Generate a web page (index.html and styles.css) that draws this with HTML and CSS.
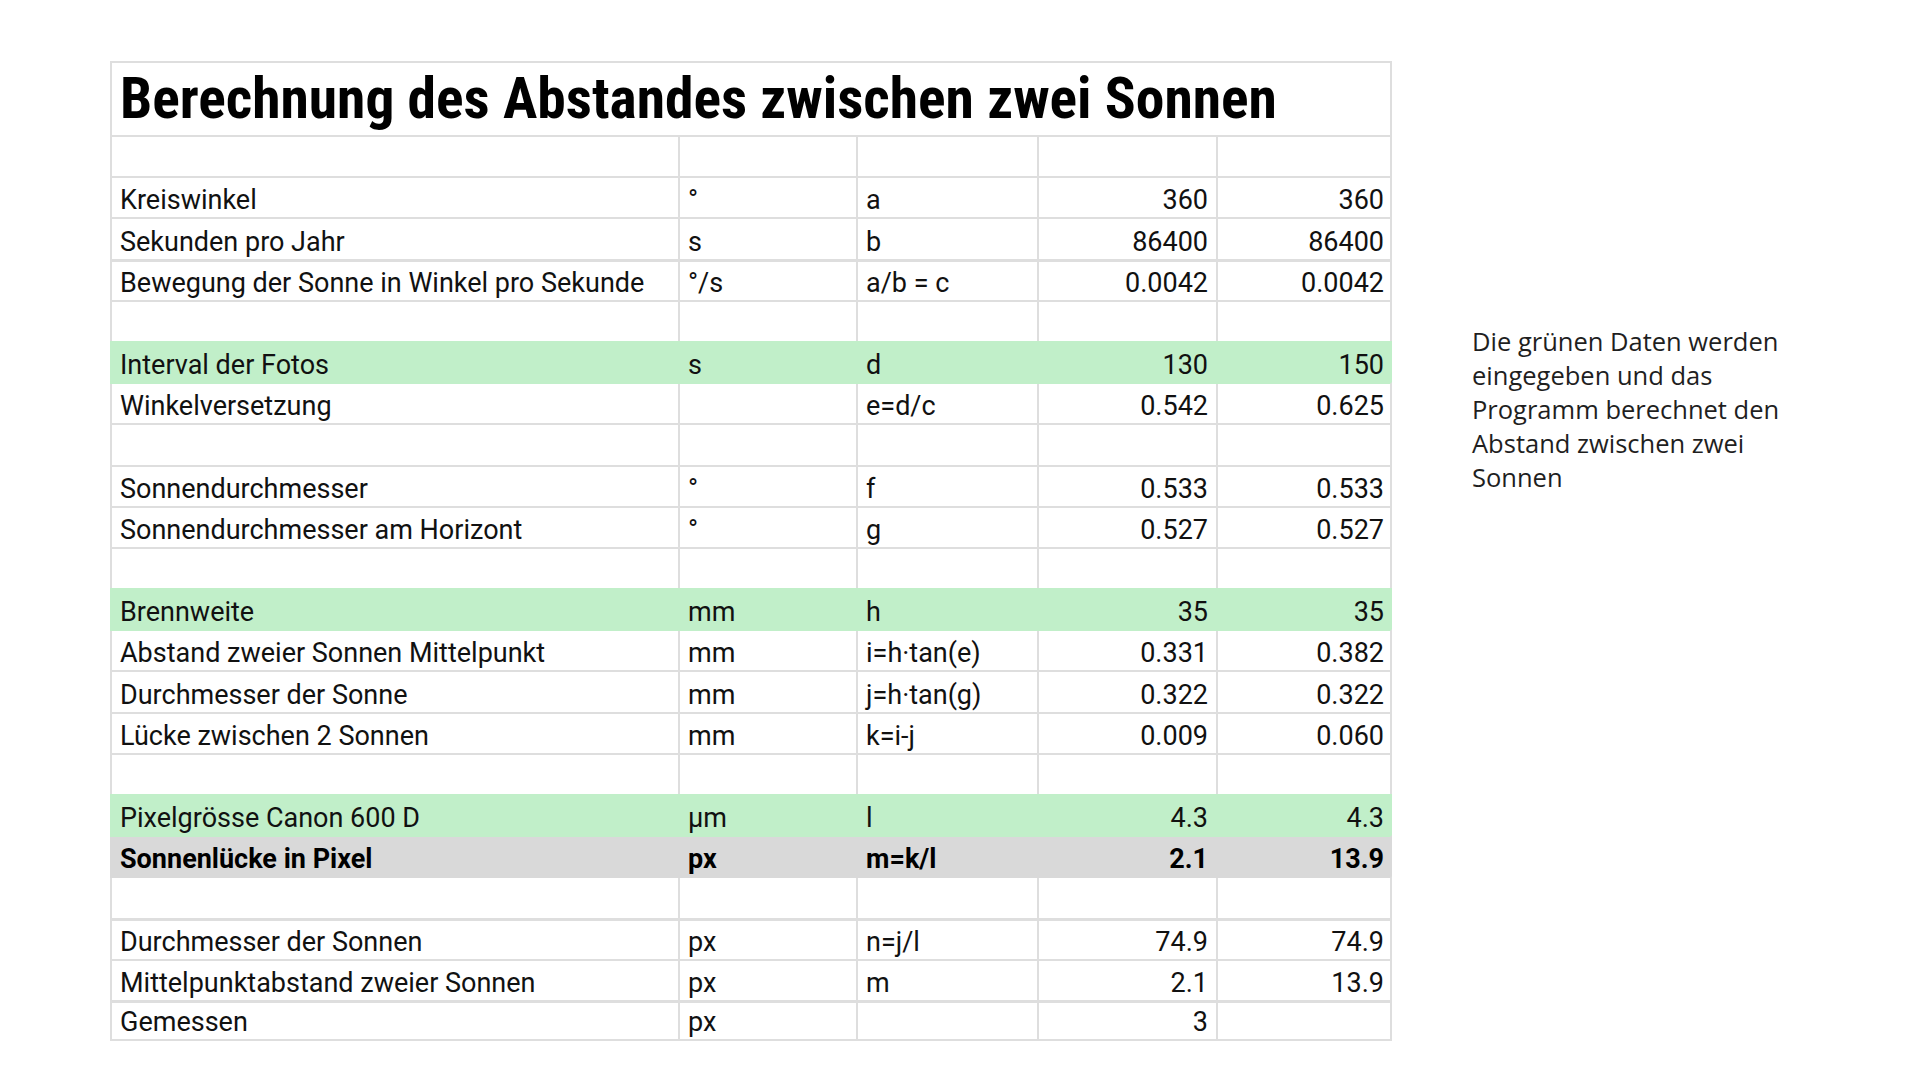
FILE: index.html
```html
<!DOCTYPE html>
<html lang="de">
<head>
<meta charset="utf-8">
<title>Berechnung des Abstandes zwischen zwei Sonnen</title>
<link rel="stylesheet" href="styles.css">
</head>
<body>
<div class="page">
  <div class="sheet">
    <div class="title-row"><h1 class="title">Berechnung des Abstandes zwischen zwei Sonnen</h1></div>
    <div class="row"><div class="c"></div><div class="c"></div><div class="c"></div><div class="c"></div><div class="c"></div></div>
    <div class="row"><div class="c">Kreiswinkel</div><div class="c">°</div><div class="c">a</div><div class="c num">360</div><div class="c num">360</div></div>
    <div class="row"><div class="c">Sekunden pro Jahr</div><div class="c">s</div><div class="c">b</div><div class="c num">86400</div><div class="c num">86400</div></div>
    <div class="row thick"><div class="c">Bewegung der Sonne in Winkel pro Sekunde</div><div class="c">°/s</div><div class="c">a/b = c</div><div class="c num">0.0042</div><div class="c num">0.0042</div></div>
    <div class="row"><div class="c"></div><div class="c"></div><div class="c"></div><div class="c"></div><div class="c"></div></div>
    <div class="row green"><div class="c">Interval der Fotos</div><div class="c">s</div><div class="c">d</div><div class="c num">130</div><div class="c num">150</div></div>
    <div class="row"><div class="c">Winkelversetzung</div><div class="c"></div><div class="c">e=d/c</div><div class="c num">0.542</div><div class="c num">0.625</div></div>
    <div class="row"><div class="c"></div><div class="c"></div><div class="c"></div><div class="c"></div><div class="c"></div></div>
    <div class="row"><div class="c">Sonnendurchmesser</div><div class="c">°</div><div class="c">f</div><div class="c num">0.533</div><div class="c num">0.533</div></div>
    <div class="row"><div class="c">Sonnendurchmesser am Horizont</div><div class="c">°</div><div class="c">g</div><div class="c num">0.527</div><div class="c num">0.527</div></div>
    <div class="row"><div class="c"></div><div class="c"></div><div class="c"></div><div class="c"></div><div class="c"></div></div>
    <div class="row green"><div class="c">Brennweite</div><div class="c">mm</div><div class="c">h</div><div class="c num">35</div><div class="c num">35</div></div>
    <div class="row"><div class="c">Abstand zweier Sonnen Mittelpunkt</div><div class="c">mm</div><div class="c">i=h·tan(e)</div><div class="c num">0.331</div><div class="c num">0.382</div></div>
    <div class="row"><div class="c">Durchmesser der Sonne</div><div class="c">mm</div><div class="c">j=h·tan(g)</div><div class="c num">0.322</div><div class="c num">0.322</div></div>
    <div class="row"><div class="c">Lücke zwischen 2 Sonnen</div><div class="c">mm</div><div class="c">k=i-j</div><div class="c num">0.009</div><div class="c num">0.060</div></div>
    <div class="row"><div class="c"></div><div class="c"></div><div class="c"></div><div class="c"></div><div class="c"></div></div>
    <div class="row green"><div class="c">Pixelgrösse Canon 600 D</div><div class="c">µm</div><div class="c">l</div><div class="c num">4.3</div><div class="c num">4.3</div></div>
    <div class="row gray bold"><div class="c">Sonnenlücke in Pixel</div><div class="c">px</div><div class="c">m=k/l</div><div class="c num">2.1</div><div class="c num">13.9</div></div>
    <div class="row"><div class="c"></div><div class="c"></div><div class="c"></div><div class="c"></div><div class="c"></div></div>
    <div class="row thick"><div class="c">Durchmesser der Sonnen</div><div class="c">px</div><div class="c">n=j/l</div><div class="c num">74.9</div><div class="c num">74.9</div></div>
    <div class="row"><div class="c">Mittelpunktabstand zweier Sonnen</div><div class="c">px</div><div class="c">m</div><div class="c num">2.1</div><div class="c num">13.9</div></div>
    <div class="row thick last"><div class="c">Gemessen</div><div class="c">px</div><div class="c"></div><div class="c num">3</div><div class="c"></div></div>
  </div>
  <p class="note">Die grünen Daten werden eingegeben und das Programm berechnet den Abstand zwischen zwei Sonnen</p>
</div>
</body>
</html>
```
FILE: styles.css
```css
html, body {
  margin: 0;
  padding: 0;
  background: #ffffff;
}

body {
  width: 1920px;
  height: 1080px;
  overflow: hidden;
  font-family: "Roboto", "Liberation Sans", sans-serif;
  color: #000;
}

.page {
  display: flex;
  align-items: flex-start;
  gap: 80px;
  padding: 61px 0 0 110px;
}

.sheet {
  display: flex;
  flex-direction: column;
  width: 1282px;
}

.title-row {
  height: 74px;
  box-sizing: border-box;
  border: 2px solid #dedede;
  border-bottom: none;
  display: flex;
  align-items: flex-end;
  padding: 0 8px 8px 8px;
}

.title {
  margin: 0;
  font-family: "Roboto Condensed", "Liberation Sans Narrow", "Roboto", sans-serif;
  font-size: 57.5px;
  font-weight: 700;
  line-height: 1;
  white-space: nowrap;
}

.row {
  display: grid;
  grid-template-columns: 568px 178px 181px 179px 176px;
  height: 41.2px;
  box-sizing: border-box;
  border-top: 2px solid #dedede;
  border-right: 2px solid #dedede;
}

.row.thick {
  border-top-width: 3px;
}

.row.last {
  border-bottom: 2px solid #dedede;
}

.c {
  box-sizing: border-box;
  border-left: 2px solid #dedede;
  padding: 0 8px 3px 8px;
  display: flex;
  align-items: flex-end;
  font-size: 27px;
  line-height: 1;
  white-space: nowrap;
  overflow: hidden;
  color: #111;
}

.c.num {
  justify-content: flex-end;
}

.row.green {
  background: #c1efc9;
  border-color: #c1efc9;
}

.row.green .c {
  border-left-color: #c1efc9;
}

.row.gray {
  background: #d9d9d9;
  border-color: #d9d9d9;
}

.row.gray .c {
  border-left-color: #d9d9d9;
}

.row.green + .row {
  border-top-color: #c1efc9;
}

.row.gray + .row {
  border-top-color: #d9d9d9;
}

.row.green + .row.gray {
  border-top-color: #c1efc9;
}

.row.bold .c {
  font-weight: 700;
  color: #000;
}

.note {
  margin: 263px 0 0 0;
  width: 345px;
  font-family: "Open Sans", "Noto Sans", sans-serif;
  font-size: 25.5px;
  line-height: 34px;
  color: #1f1f1f;
}
```
